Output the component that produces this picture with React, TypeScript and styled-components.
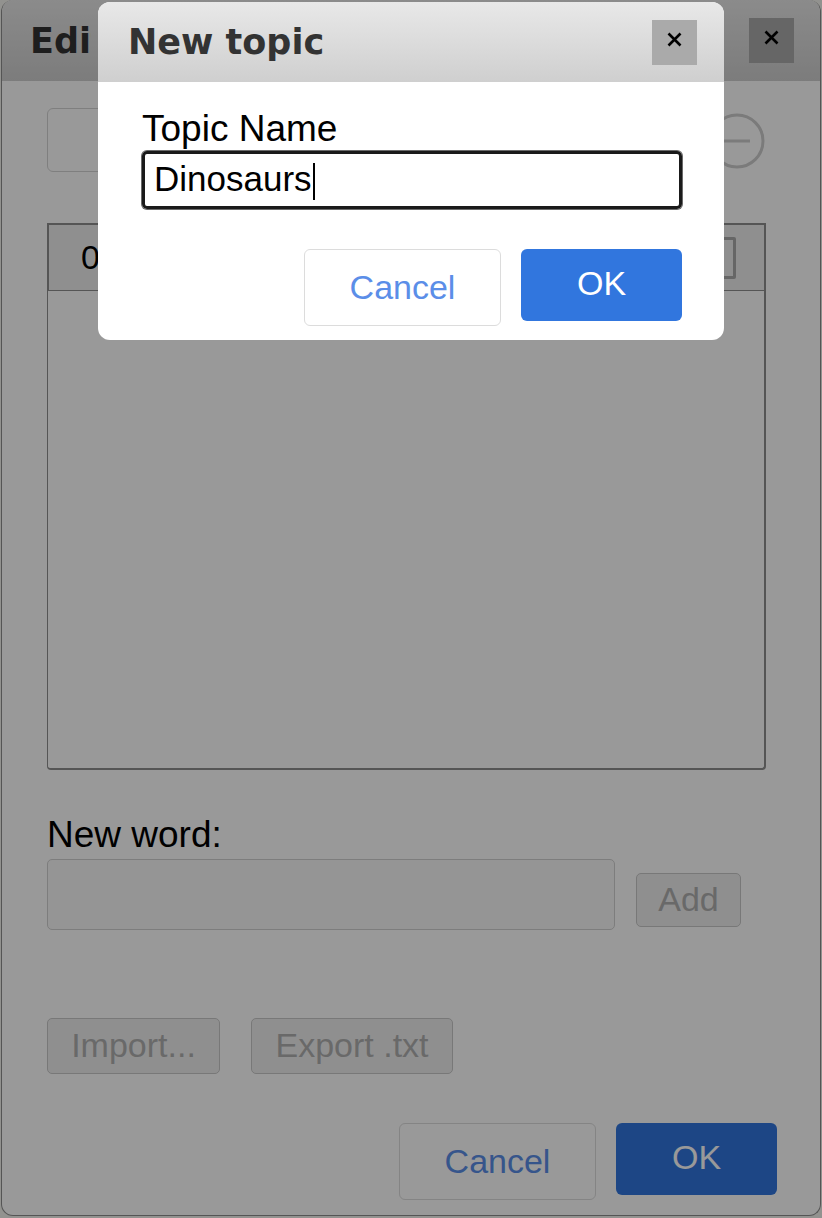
import React from "react";
import styled, { createGlobalStyle } from "styled-components";

const Global = createGlobalStyle`
  html, body {
    margin: 0;
    padding: 0;
    background: #f4f4ee;
  }
  body {
    font-family: "Liberation Sans", Arial, sans-serif;
    width: 822px;
    height: 1218px;
    overflow: hidden;
  }
`;

const Page = styled.div`
  position: relative;
  width: 822px;
  height: 1218px;
`;

const Dialog = styled.div`
  box-sizing: border-box;
  margin-left: 1px;
  width: 820px;
  height: 1216px;
  background: #fff;
  border: 1px solid #8e8e8e;
  border-top: none;
  border-radius: 12px;
  overflow: hidden;
  display: flex;
  flex-direction: column;
`;

const Header = styled.div<{ $pl: number; $pr: number; $h: number }>`
  box-sizing: border-box;
  height: ${(p) => p.$h}px;
  flex: none;
  display: flex;
  align-items: center;
  justify-content: space-between;
  padding: 0 ${(p) => p.$pr}px 0 ${(p) => p.$pl}px;
  background: linear-gradient(#e8e8e8, #cfcfcf);
`;

const HeaderStart = styled.div`
  flex: 1;
  min-width: 0;
  display: flex;
`;

const Title = styled.h1<{ $clip?: number }>`
  margin: 0;
  font-family: "DejaVu Sans", sans-serif;
  font-weight: bold;
  font-size: 35px;
  color: #333;
  white-space: nowrap;
  overflow: hidden;
  ${(p) => (p.$clip ? `width: ${p.$clip}px;` : "")}
`;

const CloseButton = styled.button`
  width: 45px;
  height: 45px;
  flex: none;
  border: none;
  padding: 0 0 6px 0;
  margin: 0;
  background: #aaaaaa;
  display: flex;
  align-items: center;
  justify-content: center;
`;

const XIcon = () => (
  <svg width="15" height="15" viewBox="0 0 15 15">
    <path d="M1.5 1.5 L13.5 13.5 M13.5 1.5 L1.5 13.5" stroke="#000" strokeWidth="2.6" />
  </svg>
);

const EditBody = styled.div`
  flex: 1;
  display: flex;
  flex-direction: column;
  padding: 27px 54px 0 45px;
`;

const TopRow = styled.div`
  display: flex;
  align-items: center;
  gap: 14px;
  height: 64px;
`;

const TopicSelect = styled.div`
  box-sizing: border-box;
  flex: 1;
  height: 64px;
  border: 1px solid #d4d4d4;
  border-radius: 6px;
  background: #fff;
`;

const RoundIcon = styled.svg`
  flex: none;
  margin-top: 2px;
`;

const Table = styled.div`
  margin-top: 51px;
  display: flex;
  flex-direction: column;
  height: 547px;
`;

const TableHead = styled.div`
  box-sizing: border-box;
  height: 68px;
  flex: none;
  display: flex;
  align-items: center;
  justify-content: space-between;
  padding: 0 28px 0 32px;
  background: #eeeeee;
  border: 2px solid #8e8e8e;
  border-bottom: 1px solid #8e8e8e;
  font-size: 34px;
  color: #000;
`;

const SelectAllBox = styled.span`
  box-sizing: border-box;
  width: 34px;
  height: 42px;
  border: 3px solid #aaaaaa;
  border-radius: 2px;
`;

const TableBody = styled.div`
  flex: 1;
  border: 2px solid #8e8e8e;
  border-top: none;
  border-left-width: 1px;
  border-radius: 0 0 4px 4px;
`;

const Label = styled.label`
  display: block;
  font-size: 37px;
  line-height: 40px;
  color: #000;
`;

const NewWordLabel = styled(Label)`
  margin-top: 45px;
`;

const NewWordRow = styled.div`
  margin-top: 4px;
  display: flex;
  align-items: flex-start;
  gap: 21px;
`;

const TextBox = styled.div`
  box-sizing: border-box;
  width: 568px;
  height: 71px;
  border: 1px solid #d0d0d0;
  border-radius: 5px;
  background: #f8f8f8;
`;

const GhostButton = styled.button<{ $w: number }>`
  box-sizing: border-box;
  width: ${(p) => p.$w}px;
  height: 56px;
  margin: 0;
  padding: 0 0 2px 0;
  border: 1px solid #c8c8c8;
  border-radius: 5px;
  background: #efefef;
  color: #b0b0b0;
  font-family: "Liberation Sans", Arial, sans-serif;
  font-size: 34px;
`;

const AddButton = styled(GhostButton)`
  height: 54px;
  margin-top: 14px;
`;

const FileRow = styled.div`
  margin-top: 88px;
  display: flex;
  gap: 31px;
`;

const Footer = styled.div<{ $pr: number; $pb: number }>`
  display: flex;
  justify-content: flex-end;
  align-items: flex-start;
  gap: 20px;
  padding: 0 ${(p) => p.$pr}px ${(p) => p.$pb}px 0;
`;

const CancelButton = styled.button`
  box-sizing: border-box;
  width: 197px;
  height: 77px;
  margin: 0;
  padding: 0;
  border: 1px solid #dcdcdc;
  border-radius: 6px;
  background: #fff;
  color: #5b8ee8;
  font-family: "Liberation Sans", Arial, sans-serif;
  font-size: 34px;
`;

const OkButton = styled.button`
  box-sizing: border-box;
  width: 161px;
  height: 72px;
  margin: 0;
  padding: 0 0 4px 0;
  border: none;
  border-radius: 6px;
  background: #3176de;
  color: #fff;
  font-family: "Liberation Sans", Arial, sans-serif;
  font-size: 34px;
`;

const Overlay = styled.div`
  position: absolute;
  inset: 0;
  background: rgba(0, 0, 0, 0.4);
`;

const TopicDialog = styled.div`
  position: absolute;
  left: 98px;
  top: 2px;
  width: 626px;
  height: 338px;
  background: #fff;
  border-radius: 12px;
  overflow: hidden;
  display: flex;
  flex-direction: column;
`;

const TopicBody = styled.div`
  padding: 27px 42px 0 44px;
  display: flex;
  flex-direction: column;
`;

const NameInput = styled.div`
  box-sizing: border-box;
  margin-top: 2px;
  height: 58px;
  border: 3px solid #1a1a1a;
  border-radius: 5px;
  box-shadow: 0 0 0 1px #6a6a6a;
  display: flex;
  align-items: center;
  padding: 0 0 3px 9px;
  font-size: 35px;
  color: #000;
`;

const Caret = styled.span`
  display: inline-block;
  width: 2px;
  height: 37px;
  background: #000;
  margin-left: 1px;
  margin-top: 6px;
`;

const TopicFooter = styled(Footer)`
  margin-top: 40px;
`;

export default function App() {
  return (
    <Page>
      <Global />
      <Dialog>
        <Header $h={81} $pl={28} $pr={26}>
          <HeaderStart>
            <Title $clip={61}>Edit Words</Title>
          </HeaderStart>
          <CloseButton aria-label="Close">
            <XIcon />
          </CloseButton>
        </Header>
        <EditBody>
          <TopRow>
            <TopicSelect />
            <RoundIcon width="58" height="58" viewBox="0 0 58 58">
              <circle cx="29" cy="29" r="26" fill="none" stroke="#cdcdcd" strokeWidth="3" />
              <path d="M16 29 H42 M29 16 V42" stroke="#cdcdcd" strokeWidth="3" />
            </RoundIcon>
            <RoundIcon width="58" height="58" viewBox="0 0 58 58">
              <circle cx="29" cy="29" r="26" fill="none" stroke="#cdcdcd" strokeWidth="3" />
              <path d="M16 29 H42" stroke="#cdcdcd" strokeWidth="3" />
            </RoundIcon>
          </TopRow>
          <Table>
            <TableHead>
              <span>0 words</span>
              <SelectAllBox />
            </TableHead>
            <TableBody />
          </Table>
          <NewWordLabel>New word:</NewWordLabel>
          <NewWordRow>
            <TextBox />
            <AddButton $w={105} disabled>
              Add
            </AddButton>
          </NewWordRow>
          <FileRow>
            <GhostButton $w={173} disabled>
              Import...
            </GhostButton>
            <GhostButton $w={202} disabled>
              Export .txt
            </GhostButton>
          </FileRow>
        </EditBody>
        <Footer $pr={43} $pb={15}>
          <CancelButton>Cancel</CancelButton>
          <OkButton>OK</OkButton>
        </Footer>
      </Dialog>
      <Overlay />
      <TopicDialog>
        <Header $h={80} $pl={30} $pr={27}>
          <Title>New topic</Title>
          <CloseButton aria-label="Close">
            <XIcon />
          </CloseButton>
        </Header>
        <TopicBody>
          <Label>Topic Name</Label>
          <NameInput>
            Dinosaurs
            <Caret />
          </NameInput>
          <TopicFooter $pr={0} $pb={0}>
            <CancelButton>Cancel</CancelButton>
            <OkButton>OK</OkButton>
          </TopicFooter>
        </TopicBody>
      </TopicDialog>
    </Page>
  );
}
